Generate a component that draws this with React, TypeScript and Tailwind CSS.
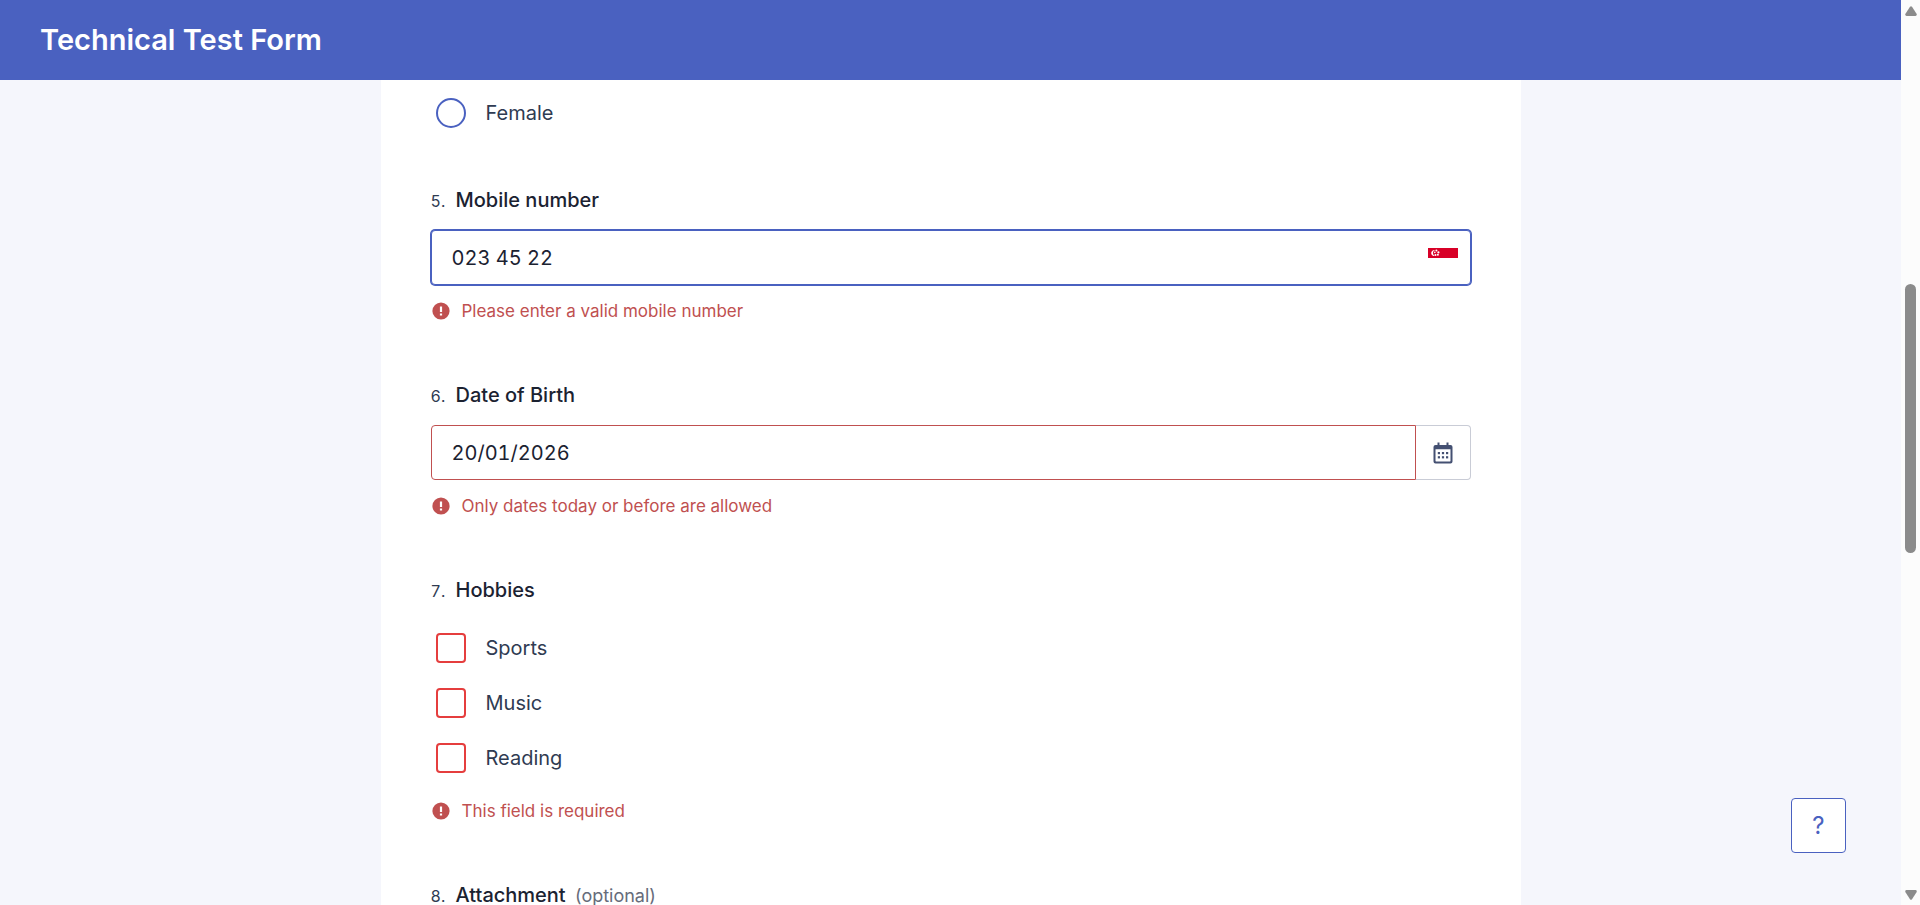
import type { ReactNode } from "react";

const HOBBIES = ["Sports", "Music", "Reading"];

function FieldLabel({ number, children, htmlFor }: { number: number; children: ReactNode; htmlFor?: string }) {
  const content = (
    <>
      <span className="w-[25px] text-base tabular-nums text-[#2f3b52]">{number}.</span>
      <span className="font-medium">{children}</span>
    </>
  );
  const style = "flex items-baseline text-xl leading-[30px] text-[#1b2231]";
  return htmlFor ? (
    <label htmlFor={htmlFor} className={style}>
      {content}
    </label>
  ) : (
    <div className={style}>{content}</div>
  );
}

function FieldError({ children }: { children: ReactNode }) {
  return (
    <p className="flex items-center gap-3 pl-px text-[17px] leading-[30px] text-[#c05050]">
      <svg viewBox="0 0 18 18" className="size-[18px] shrink-0" aria-hidden="true">
        <circle cx="9" cy="9" r="8.6" fill="#c05050" />
        <path d="M7.900 4.500h2.200v5.500h-2.200z" fill="#fff" />
        <rect x="7.900" y="11.500" width="2.200" height="2" fill="#fff" />
      </svg>
      {children}
    </p>
  );
}

function SingaporeFlag() {
  return (
    <svg viewBox="0 0 30 20" className="h-5 w-[30px]" role="img" aria-label="Singapore">
      <rect width="30" height="10" fill="#d80027" />
      <rect y="10" width="30" height="10" fill="#fff" />
      <path d="M5 5c0-1.500.9-2.700 2.200-3C5.100 1.500 3.200 3 3.200 5s1.900 3.500 4 3C5.900 7.700 5 6.500 5 5z" fill="#fff" />
      <g fill="#fff">
        <circle cx="8.400" cy="2.600" r="1" />
        <circle cx="6.800" cy="4.400" r=".8" />
        <circle cx="10.400" cy="4.400" r="1.100" />
        <circle cx="7.500" cy="7" r="1" />
        <circle cx="9.900" cy="6.800" r="1" />
      </g>
    </svg>
  );
}

function CalendarIcon() {
  return (
    <svg viewBox="0 0 20 22" className="h-[22px] w-5" aria-hidden="true">
      <path
        fill="#445072"
        fillRule="evenodd"
        d="M4.500 .5h2V3h7V.5h2V3H17.500A2 2 0 0 1 19.500 5v14.500a2 2 0 0 1-2 2h-15a2 2 0 0 1-2-2V5A2 2 0 0 1 2.500 3H4.500zM2.500 7.200v11.800c0 .3.2.5.5.5h14c.3 0 .5-.2.5-.5V7.200z"
      />
      <g fill="#445072">
        <rect x="4.800" y="10" width="2.200" height="2.200" />
        <rect x="8.900" y="10" width="2.200" height="2.200" />
        <rect x="13" y="10" width="2.200" height="2.200" />
        <rect x="4.800" y="14.200" width="2.200" height="2.200" />
        <rect x="8.900" y="14.200" width="2.200" height="2.200" />
        <rect x="13" y="14.200" width="2.200" height="2.200" />
      </g>
    </svg>
  );
}

function Scrollbar() {
  return (
    <div className="flex w-[19px] shrink-0 flex-col items-center bg-[#fcfcfc] pt-1.5 pb-[5px]" aria-hidden="true">
      <svg viewBox="0 0 12 10" className="h-2.5 w-3">
        <path d="M5 .8Q6-.4 7 .8l4.700 7.200Q12 10 10.500 10h-9Q0 10 .3 8z" fill="#8b8b8b" />
      </svg>
      <div className="flex w-full flex-1 flex-col items-center">
        <div className="grow-[268]" />
        <div className="w-[11px] grow-[269] rounded-full bg-[#8b8b8b]" />
        <div className="grow-[337]" />
      </div>
      <svg viewBox="0 0 12 10" className="h-2.5 w-3">
        <path d="M5 9.200Q6 10.400 7 9.200L11.700 2Q12 0 10.500 0h-9Q0 0 .3 2z" fill="#8b8b8b" />
      </svg>
    </div>
  );
}

export default function App() {
  return (
    <div className="flex h-screen overflow-hidden bg-[#f5f6fc] font-['Inter',sans-serif] text-[#2f3b52]">
      <div className="flex min-w-0 flex-1 flex-col">
        <header className="flex h-20 shrink-0 items-center bg-[#4a61c0] px-10">
          <h1 className="text-[29px] leading-9 font-semibold text-white">Technical Test Form</h1>
        </header>

        <main className="min-h-0 flex-1 overflow-hidden">
          <form className="mx-auto flex min-h-full w-full max-w-[1140px] flex-col gap-[55px] bg-white px-[50px] pt-4">
            <label className="flex h-[34px] items-center gap-5 pl-[5px] text-xl leading-[30px]">
              <input
                type="radio"
                name="gender"
                className="size-[30px] appearance-none rounded-full border-2 border-[#4a61c0] bg-white"
              />
              Female
            </label>

            <div className="flex flex-col">
              <FieldLabel number={5} htmlFor="mobile">
                Mobile number
              </FieldLabel>
              <div className="mt-[15px] flex h-[55px] items-center rounded border border-[#4a61c0] bg-white pr-3 ring-1 ring-[#4a61c0]">
                <input
                  id="mobile"
                  type="tel"
                  defaultValue="023 45 22"
                  className="h-full min-w-0 flex-1 bg-transparent px-5 text-xl tabular-nums text-[#1b2231] outline-none"
                />
                <SingaporeFlag />
              </div>
              <div className="mt-[11px] -mb-px">
                <FieldError>Please enter a valid mobile number</FieldError>
              </div>
            </div>

            <div className="flex flex-col">
              <FieldLabel number={6} htmlFor="birth">
                Date of Birth
              </FieldLabel>
              <div className="mt-[15px] flex h-[55px]">
                <input
                  id="birth"
                  type="text"
                  defaultValue="20/01/2026"
                  className="min-w-0 flex-1 rounded-l border border-[#c05050] bg-white px-5 text-xl tabular-nums text-[#1b2231] outline-none"
                />
                <button
                  type="button"
                  aria-label="Choose date"
                  className="flex w-[55px] items-center justify-center rounded-r border border-l-0 border-[#c9ccd6] bg-white"
                >
                  <CalendarIcon />
                </button>
              </div>
              <div className="mt-[11px] -mb-px">
                <FieldError>Only dates today or before are allowed</FieldError>
              </div>
            </div>

            <div className="flex flex-col" role="group" aria-label="Hobbies">
              <FieldLabel number={7}>Hobbies</FieldLabel>
              <div className="mt-7 flex flex-col gap-[25px]">
                {HOBBIES.map((hobby) => (
                  <label key={hobby} className="flex items-center gap-5 pl-[5px] text-xl leading-[30px]">
                    <input
                      type="checkbox"
                      name="hobbies"
                      value={hobby}
                      className="size-[30px] appearance-none rounded border-2 border-[#e53e3e] bg-white"
                    />
                    {hobby}
                  </label>
                ))}
              </div>
              <div className="mt-[23px] -mb-px">
                <FieldError>This field is required</FieldError>
              </div>
            </div>

            <FieldLabel number={8}>
              Attachment <span className="ml-1 text-lg font-normal text-[#666c7a]">(optional)</span>
            </FieldLabel>
          </form>
        </main>
      </div>

      <button
        type="button"
        aria-label="Help"
        className="fixed right-[74px] bottom-[52px] flex size-[55px] items-center justify-center rounded border border-[#4a61c0] bg-white text-2xl text-[#4a61c0]"
      >
        ?
      </button>

      <Scrollbar />
    </div>
  );
}
